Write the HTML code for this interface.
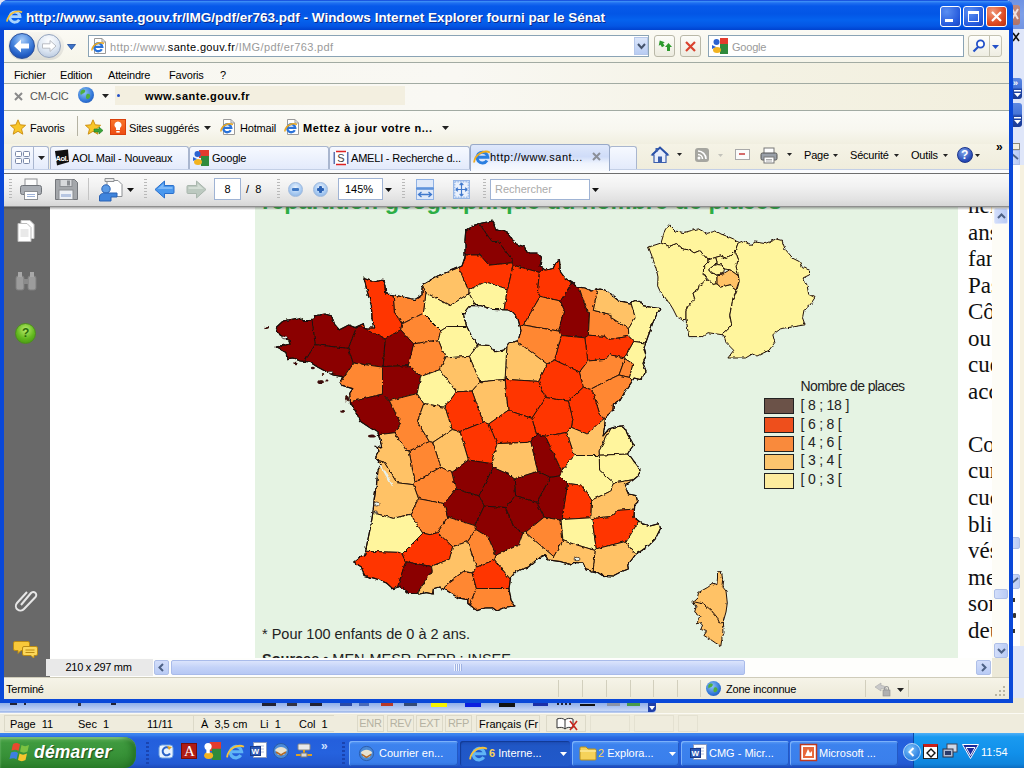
<!DOCTYPE html>
<html><head><meta charset="utf-8"><title>er763.pdf</title>
<style>
html,body{margin:0;padding:0;}
body{width:1024px;height:768px;overflow:hidden;position:relative;background:#dfe4f7;font-family:"DejaVu Sans Condensed","Liberation Sans",sans-serif;font-size:11px;color:#000;}
div,span{position:absolute;box-sizing:border-box;white-space:nowrap;}
.t{font-family:"Liberation Sans",sans-serif;font-size:11px;line-height:14px;letter-spacing:-0.2px;}
.b{font-weight:bold;}
svg{position:absolute;overflow:visible;}
.lg{font-family:"Liberation Sans",sans-serif;font-size:14px;line-height:18px;color:#222;letter-spacing:-0.2px;}
.sb{top:715px;width:27px;height:17px;border:1px solid #dcd9c8;font-family:"Liberation Sans",sans-serif;font-size:11px;line-height:15px;text-align:center;color:#b5b2a2;letter-spacing:-.3px;}
.tb{top:741px;height:25px;border-radius:3px;background:linear-gradient(#5a9bf5 0,#3c82ee 15%,#3a7fec 85%,#2f6fd8 100%);box-shadow:inset 1px 1px 0 #7ab0fa,inset -1px -1px 0 #2459c4;}
.tb.act{background:linear-gradient(#1c4cb4 0,#2057c6 20%,#2159ca 100%);box-shadow:inset 1px 1px 1px #123a94;}
.tl{top:746px;color:#fff;letter-spacing:0;}
</style></head><body>

<!-- ===== background (other windows behind) ===== -->
<div id="bgright" style="left:1009px;top:0;width:15px;height:737px;background:#dfe6f9;background-image:radial-gradient(#eef2fd 0.6px,transparent 0.7px);background-size:2px 2px;"></div>
<div style="left:1009px;top:0;width:15px;height:29px;background:linear-gradient(#6f93e4,#7d9fe8 50%,#7394e2);"></div>
<div style="left:1009px;top:5px;width:11px;height:20px;background:linear-gradient(#c08a80,#b07468);border-radius:0 3px 3px 0;"></div>
<svg style="left:1012px;top:9px" width="7" height="11" viewBox="0 0 7 11"><path d="M0 0 L6 10 M0 10 L6 0" stroke="#efe0dc" stroke-width="2"/></svg>
<svg style="left:1013px;top:33px" width="7" height="9" viewBox="0 0 7 9"><path d="M0 0 L6 8 M0 8 L6 0" stroke="#111" stroke-width="1.600"/></svg>
<div style="left:1009px;top:78px;width:13px;height:21px;border-radius:0 3px 3px 0;background:linear-gradient(#5c88e2 0,#4775d8 45%,#1f45a6 55%,#1a3c98 100%);"></div>
<div class="t b" style="left:1013px;top:76px;color:#fff;font-size:9px;letter-spacing:-1px;">››</div>
<svg style="left:1014px;top:90px" width="7" height="7" viewBox="0 0 7 7"><path d="M0 0h7v1.500h-7z M0 3h7L3.500 7z" fill="#fff"/></svg>
<div style="left:1009px;top:103px;width:13px;height:24px;border-radius:0 3px 3px 0;background:linear-gradient(#5c88e2 0,#4775d8 45%,#1f45a6 55%,#1a3c98 100%);"></div>
<svg style="left:1014px;top:117px" width="7" height="7" viewBox="0 0 7 7"><path d="M0 0h7v1.500h-7z M0 3h7L3.500 7z" fill="#fff"/></svg>
<div style="left:1009px;top:143px;width:11px;height:7px;background:#f4f1e2;border:1px solid #8a8878;"></div>
<div style="left:1009px;top:150px;width:11px;height:15px;background:linear-gradient(90deg,#d3defa,#b9cbf5);border:1px solid #aebfe8;"></div>
<svg style="left:1012px;top:154px" width="7" height="6" viewBox="0 0 7 6"><path d="M0 0 L6 5" stroke="#4d6185" stroke-width="1.800"/></svg>
<div style="left:1009px;top:165px;width:10.500px;height:481px;background:#fff;"></div>
<div style="left:1019.500px;top:165px;width:4.500px;height:481px;background:#f6f1e0;"></div>
<div style="left:1009px;top:537px;width:11px;height:12px;border-radius:2px;background:linear-gradient(90deg,#d3defa,#b9cbf5);border:1px solid #aebfe8;"></div>
<div style="left:1009px;top:574px;width:11px;height:15px;border-radius:2px;background:linear-gradient(90deg,#d3defa,#b9cbf5);border:1px solid #aebfe8;"></div>
<svg style="left:1012px;top:578px" width="7" height="6" viewBox="0 0 7 6"><path d="M0 5 L6 0" stroke="#4d6185" stroke-width="1.800"/></svg>
<div style="left:1013px;top:598px;width:2px;height:4px;background:#333;"></div>
<div style="left:1013px;top:613px;width:3px;height:5px;background:#333;border-radius:1px;"></div>
<div style="left:1013px;top:629px;width:2px;height:4px;background:#333;"></div>
<div id="bgbottom" style="left:0;top:698px;width:1024px;height:40px;background:#ece9d8;"></div>

<!-- ===== IE window ===== -->
<div id="win" style="left:0;top:0;width:1013px;height:703px;background:#0a48d8;border-radius:8px 8px 0 0;"></div>
<div id="titlebar" style="left:0;top:0;width:1013px;height:30px;border-radius:8px 8px 0 0;background:linear-gradient(#0a3bd6 0,#3a8cf6 1.500px,#1f6ff0 3px,#0759ea 6px,#0356e6 14px,#0562ee 20px,#0456e4 26px,#0042cf 30px);"></div>
<div id="title" class="b" style="left:26px;top:9px;font-family:'Liberation Sans',sans-serif;font-size:13.5px;line-height:17px;color:#fff;text-shadow:1px 1px 0 #0a2a8c;letter-spacing:0;">http://www.sante.gouv.fr/IMG/pdf/er763.pdf - Windows Internet Explorer fourni par le Sénat</div>

<div id="client" style="left:4px;top:30px;width:1005px;height:668px;background:#f5f3e6;"></div>

<!-- CHROME START -->
<!-- address row -->
<div style="left:4px;top:30px;width:1005px;height:32px;background:linear-gradient(#fbfaf4,#f6f5ea);"></div>
<div style="left:4px;top:62px;width:1005px;height:1px;background:#a2aba3;box-shadow:0 1px 0 #fdfdfa;"></div>
<!-- back/forward -->
<div style="left:8px;top:32px;width:56px;height:28px;border-radius:14px;background:linear-gradient(#f4f3ee,#c9c9c4);opacity:.55;"></div>
<div style="left:9px;top:33px;width:26px;height:26px;border-radius:13px;background:radial-gradient(circle at 50% 25%,#a9cdf8 0,#4d8ae0 40%,#245fc6 70%,#163f98 100%);border:1px solid #2a4f9a;"></div>
<svg style="left:13px;top:39px" width="18" height="14" viewBox="0 0 18 14"><path d="M1 7 L8 0.5 L8 4.5 L16 4.5 L16 9.5 L8 9.5 L8 13.5 Z" fill="#fff"/></svg>
<div style="left:37px;top:34px;width:24px;height:24px;border-radius:12px;background:radial-gradient(circle at 50% 25%,#fdfeff 0,#dbe5f2 55%,#aebfd8 100%);border:1px solid #93a3bd;"></div>
<svg style="left:41px;top:40px" width="16" height="12" viewBox="0 0 16 12"><path d="M15 6 L9 0.5 L9 3.8 L1.5 3.8 L1.5 8.2 L9 8.2 L9 11.5 Z" fill="#fff" stroke="#b9bdc4" stroke-width="1"/></svg>
<svg style="left:67px;top:44px" width="9" height="6" viewBox="0 0 9 6"><path d="M0.5 0.5 L8.5 0.5 L4.5 5.5 Z" fill="#3d73c8" stroke="#1d4a9a" stroke-width=".8"/></svg>
<!-- address box -->
<div style="left:88px;top:35px;width:561px;height:22px;background:#fff;border:1px solid #8aa3b5;"></div>
<svg style="left:91px;top:38px" width="16" height="16" viewBox="0 0 16 16"><path d="M3.500 .5h7.500l3.500 3.500v11.500h-11z" fill="#fff" stroke="#9a9a9a"/><path d="M11 .5v3.500h3.500" fill="none" stroke="#9a9a9a"/><path d="M10.800 11.200 A4 4 0 1 1 11.300 8.800 L4.200 8.800" fill="none" stroke="#2a72d8" stroke-width="2.300"/><path d="M.8 12.500 C1.500 6.500,8 3.500,13 5.500" fill="none" stroke="#eaa820" stroke-width="1.500"/></svg>
<div class="t" style="left:110px;top:40px;font-size:11px;color:#9a9a9a;letter-spacing:0.36px;">http://www.<span style="position:static;color:#000">sante.gouv.fr</span>/IMG/pdf/er763.pdf</div>
<div style="left:634px;top:37px;width:14px;height:18px;background:linear-gradient(#dbe6fb,#b8ccf3);border:1px solid #b5c7ea;"></div>
<svg style="left:637px;top:43px" width="9" height="7" viewBox="0 0 9 7"><path d="M1 1 L4.5 5 L8 1" fill="none" stroke="#45536c" stroke-width="2"/></svg>
<!-- refresh / stop -->
<div style="left:654px;top:35px;width:21px;height:22px;border:1px solid #b9b8a8;border-radius:3px;background:linear-gradient(#fdfdf9,#ecebdf);"></div>
<svg style="left:657px;top:39px" width="16" height="14" viewBox="0 0 16 14"><path d="M1 5 L4.5 1 L8 5 L6 5 L6 8 L3 8 L3 5 Z" fill="#2c9a2c" transform="rotate(-30 4.5 4.5)"/><path d="M8 8 L11.5 4 L15 8 L13 8 L13 12 L10 12 L10 8 Z" fill="#2c9a2c"/></svg>
<div style="left:680px;top:35px;width:21px;height:22px;border:1px solid #b9b8a8;border-radius:3px;background:linear-gradient(#fdfdf9,#ecebdf);"></div>
<svg style="left:685px;top:41px" width="11" height="11" viewBox="0 0 11 11"><path d="M1 1 L10 10 M10 1 L1 10" stroke="#d9432f" stroke-width="2.2"/></svg>
<!-- search box -->
<div style="left:708px;top:35px;width:256px;height:22px;background:#fff;border:1px solid #8aa3b5;"></div>
<svg style="left:712px;top:38px" width="16" height="16" viewBox="0 0 16 16"><rect x="6" y="0" width="10" height="8" fill="#e33b2e"/><rect x="8" y="6" width="8" height="10" fill="#2f8a3c"/><rect x="0" y="0" width="8" height="16" fill="#fff"/><circle cx="4.5" cy="4" r="3" fill="#2b62d0"/><ellipse cx="5" cy="12" rx="4" ry="3" fill="#f2b320"/><path d="M0 7 L4 9 L0 11z" fill="#2b62d0"/></svg>
<div class="t" style="left:732px;top:40px;color:#9a9a9a;">Google</div>
<div style="left:968px;top:35px;width:22px;height:22px;border:1px solid #c4c3b3;border-radius:3px 0 0 3px;background:linear-gradient(#fefefb,#eeedE2);"></div>
<div style="left:989px;top:35px;width:13px;height:22px;border:1px solid #c4c3b3;border-radius:0 3px 3px 0;background:linear-gradient(#fefefb,#eeede2);"></div>
<svg style="left:972px;top:39px" width="14" height="14" viewBox="0 0 14 14"><circle cx="8.5" cy="5" r="3.6" fill="#fff" stroke="#2350c8" stroke-width="1.8"/><path d="M6 8 L1.5 12.5" stroke="#2350c8" stroke-width="2.2"/></svg>
<svg style="left:992px;top:45px" width="7" height="4" viewBox="0 0 7 4"><path d="M0 0h7L3.5 4z" fill="#2350c8"/></svg>

<!-- menu row -->
<div style="left:4px;top:63px;width:1005px;height:20px;background:linear-gradient(90deg,#f8f7f0 0,#f9f8f3 45%,#f4f2e4 75%,#f2efde 100%);"></div>
<div style="left:4px;top:83px;width:1005px;height:1px;background:#a2aba3;box-shadow:0 1px 0 #fdfdfa;"></div>
<div class="t" style="left:14px;top:68px;">Fichier</div>
<div class="t" style="left:60px;top:68px;">Edition</div>
<div class="t" style="left:108px;top:68px;">Atteindre</div>
<div class="t" style="left:169px;top:68px;">Favoris</div>
<div class="t" style="left:220px;top:68px;">?</div>

<!-- cm-cic row -->
<div style="left:4px;top:84px;width:1005px;height:26px;background:linear-gradient(90deg,#faf9f3 0,#f9f8f3 45%,#f4f2e4 75%,#f2efde 100%);"></div>
<div style="left:115px;top:86px;width:290px;height:19px;background:#f3efe0;"></div>
<div style="left:4px;top:110px;width:1005px;height:1px;background:#a2aba3;box-shadow:0 1px 0 #fdfdfa;"></div>
<svg style="left:14px;top:92px" width="9" height="9" viewBox="0 0 9 9"><path d="M1 1 L8 8 M8 1 L1 8" stroke="#8a8a8a" stroke-width="2"/></svg>
<div class="t" style="left:30px;top:89px;color:#555;">CM-CIC</div>
<div style="left:78px;top:87px;width:16px;height:16px;border-radius:8px;background:radial-gradient(circle at 40% 35%,#8fc4f6 0,#2f74d6 60%,#1c4aa0 100%);"></div>
<svg style="left:78px;top:87px" width="16" height="16" viewBox="0 0 16 16"><path d="M4 3 C6 2,8 3,7 5 C6 7,4 6,3 8 C2 7,2 4,4 3z M9 7 C11 6,13 8,12 10 C11 12,9 13,8 11 C8 9,8 8,9 7z" fill="#4fae3e"/></svg>
<svg style="left:102px;top:94px" width="7" height="4" viewBox="0 0 7 4"><path d="M0 0h7L3.5 4z" fill="#222"/></svg>
<div style="left:117px;top:94px;width:3px;height:3px;border-radius:2px;background:#2350c8;"></div>
<div class="t b" style="left:145px;top:89px;letter-spacing:.5px;">www.sante.gouv.fr</div>

<!-- favorites row -->
<div style="left:4px;top:111px;width:1005px;height:33px;background:linear-gradient(#fbfbf6,#f8f7f0 55%,#f1efe0);"></div>
<svg style="left:10px;top:119px" width="16" height="16" viewBox="0 0 16 16"><path d="M8 .8 L10.2 5.8 L15.6 6.3 L11.5 9.9 L12.8 15.2 L8 12.3 L3.2 15.2 L4.5 9.9 L.4 6.3 L5.8 5.8z" fill="#f8c62a" stroke="#c98a0c" stroke-width=".9"/></svg>
<div class="t" style="left:30px;top:121px;">Favoris</div>
<div style="left:77px;top:116px;width:1px;height:20px;background:#b5b3a3;"></div>
<svg style="left:85px;top:119px" width="18" height="16" viewBox="0 0 18 16"><path d="M8 .8 L10.2 5.8 L15.6 6.3 L11.5 9.9 L12.8 15.2 L8 12.3 L3.2 15.2 L4.5 9.9 L.4 6.3 L5.8 5.8z" fill="#f8c62a" stroke="#c98a0c" stroke-width=".9"/><path d="M9 10 h5 v-2 l4 3.5 l-4 3.5 v-2 h-5z" fill="#3aa53a" stroke="#1f7a1f" stroke-width=".6"/></svg>
<div style="left:110px;top:119px;width:16px;height:16px;background:linear-gradient(#f7742a,#ee4e14);border:1px solid #d9400c;"></div>
<svg style="left:110px;top:119px" width="16" height="16" viewBox="0 0 16 16"><path d="M8 2.5 a3.6 3.6 0 0 1 2 6.6 v2 h-4 v-2 a3.6 3.6 0 0 1 2 -6.6z" fill="#fff"/><rect x="6.3" y="12" width="3.4" height="1.6" fill="#fff"/></svg>
<div class="t" style="left:129px;top:121px;">Sites suggérés</div>
<svg style="left:204px;top:126px" width="7" height="4" viewBox="0 0 7 4"><path d="M0 0h7L3.5 4z" fill="#222"/></svg>
<svg style="left:220px;top:119px" width="16" height="16" viewBox="0 0 16 16"><path d="M3.500 .5h7.500l3.500 3.500v11.500h-11z" fill="#fff" stroke="#9a9a9a"/><path d="M11 .5v3.500h3.500" fill="none" stroke="#9a9a9a"/><path d="M10.800 11.200 A4 4 0 1 1 11.300 8.800 L4.200 8.800" fill="none" stroke="#2a72d8" stroke-width="2.300"/><path d="M.8 12.500 C1.500 6.500,8 3.500,13 5.500" fill="none" stroke="#eaa820" stroke-width="1.500"/></svg>
<div class="t" style="left:240px;top:121px;">Hotmail</div>
<svg style="left:284px;top:119px" width="16" height="16" viewBox="0 0 16 16"><path d="M3.500 .5h7.500l3.500 3.500v11.500h-11z" fill="#fff" stroke="#9a9a9a"/><path d="M11 .5v3.500h3.500" fill="none" stroke="#9a9a9a"/><path d="M10.800 11.200 A4 4 0 1 1 11.300 8.800 L4.200 8.800" fill="none" stroke="#2a72d8" stroke-width="2.300"/><path d="M.8 12.500 C1.500 6.500,8 3.500,13 5.500" fill="none" stroke="#eaa820" stroke-width="1.500"/></svg>
<div class="t b" style="left:303px;top:121px;letter-spacing:.56px;">Mettez à jour votre n...</div>
<svg style="left:442px;top:126px" width="7" height="4" viewBox="0 0 7 4"><path d="M0 0h7L3.5 4z" fill="#222"/></svg>

<!-- tab row -->
<div style="left:4px;top:144px;width:1005px;height:28px;background:linear-gradient(#f5f3e6,#efecdb);"></div>
<div style="left:4px;top:169px;width:1005px;height:1px;background:#c3cfe6;"></div>
<div style="left:4px;top:170px;width:1005px;height:3px;background:#fbfcfe;"></div>
<div style="left:11px;top:146px;width:23px;height:23px;border:1px solid #a9b6cf;border-bottom:none;border-radius:3px 0 0 0;background:linear-gradient(#f8faff,#e4ebfb);"></div>
<svg style="left:15px;top:151px" width="16" height="14" viewBox="0 0 16 14"><g fill="#fff" stroke="#7a88a8"><rect x=".5" y=".5" width="6" height="5" rx="1"/><rect x="8.5" y=".5" width="6" height="5" rx="1"/><rect x=".5" y="7.5" width="6" height="5" rx="1"/><rect x="8.5" y="7.5" width="6" height="5" rx="1"/></g></svg>
<div style="left:34px;top:146px;width:15px;height:23px;border:1px solid #a9b6cf;border-bottom:none;border-left:none;border-radius:0 3px 0 0;background:linear-gradient(#f8faff,#e4ebfb);"></div>
<svg style="left:38px;top:156px" width="7" height="4" viewBox="0 0 7 4"><path d="M0 0h7L3.5 4z" fill="#222"/></svg>
<div style="left:50px;top:146px;width:139px;height:23px;border:1px solid #a9b6cf;border-bottom:none;border-radius:3px 3px 0 0;background:linear-gradient(#f6f9ff,#e3eafb);"></div>
<div style="left:189px;top:146px;width:140px;height:23px;border:1px solid #a9b6cf;border-bottom:none;border-radius:3px 3px 0 0;background:linear-gradient(#f6f9ff,#e3eafb);"></div>
<div style="left:329px;top:146px;width:141px;height:23px;border:1px solid #a9b6cf;border-bottom:none;border-radius:3px 3px 0 0;background:linear-gradient(#f6f9ff,#e3eafb);"></div>
<div style="left:609px;top:146px;width:28px;height:23px;border:1px solid #a9b6cf;border-bottom:none;border-radius:3px 3px 0 0;background:linear-gradient(#f6f9ff,#e3eafb);"></div>
<div style="left:470px;top:144px;width:140px;height:27px;border:1px solid #98a9c8;border-bottom:none;border-radius:3px 3px 0 0;background:linear-gradient(#dfe8fb 0,#cfdcf8 45%,#eef3fd 70%,#f8fafe 100%);"></div>
<!-- tab 1 aol -->
<svg style="left:53px;top:149px" width="17" height="17" viewBox="0 0 17 17"><path d="M2 2 L15 0.5 L16 13 L4 16.5 Z" fill="#111"/><text x="2.6" y="11.5" font-family="Liberation Sans,sans-serif" font-weight="bold" font-size="7.5" fill="#fff" letter-spacing="-.5">Aol.</text></svg>
<div class="t" style="left:72px;top:151px;">AOL Mail - Nouveaux</div>
<svg style="left:193px;top:150px" width="16" height="16" viewBox="0 0 16 16"><rect x="6" y="0" width="10" height="8" fill="#e33b2e"/><rect x="8" y="6" width="8" height="10" fill="#2f8a3c"/><rect x="0" y="0" width="8" height="16" fill="#fff" opacity=".0"/><circle cx="4.5" cy="4" r="3" fill="#2b62d0"/><ellipse cx="5" cy="12" rx="4" ry="3" fill="#f2b320"/><path d="M0 7 L4 9 L0 11z" fill="#2b62d0"/></svg>
<div class="t" style="left:212px;top:151px;">Google</div>
<svg style="left:333px;top:150px" width="16" height="16" viewBox="0 0 16 16"><rect x="2.5" y="1" width="11" height="14" fill="#fff"/><path d="M3 1.5h10M3 14.5h10" stroke="#d22" stroke-width="1.4"/><path d="M1.2 2v12M14.8 2v12" stroke="#39509a" stroke-width="1.2"/><text x="4.2" y="12.2" font-family="Liberation Sans,sans-serif" font-size="11" fill="#444">S</text></svg>
<div class="t" style="left:351px;top:151px;">AMELI - Recherche d...</div>
<svg style="left:473px;top:148px" width="18" height="18" viewBox="0 0 18 18"><path d="M14 12.500 A5.400 5.400 0 1 1 14.800 9.200 L5 9.200" fill="none" stroke="#2b7fe0" stroke-width="3"/><path d="M1 14.500 C2 6,11 1.500,17 4.500" fill="none" stroke="#f0ac1c" stroke-width="1.800"/></svg>
<div class="t" style="left:490px;top:150px;letter-spacing:.5px;">http://www.sant...</div>
<svg style="left:592px;top:152px" width="9" height="9" viewBox="0 0 9 9"><path d="M1 1 L8 8 M8 1 L1 8" stroke="#8b8f98" stroke-width="2"/></svg>
<!-- command bar -->
<svg style="left:651px;top:146px" width="18" height="18" viewBox="0 0 18 18"><path d="M1 9 L9 1.5 L17 9 L15 9 L15 16.5 L3 16.5 L3 9z" fill="#e8eefb" stroke="#3b5fae" stroke-width="1.2"/><path d="M1 9 L9 1.5 L17 9" fill="none" stroke="#2b52a8" stroke-width="2"/><rect x="7" y="10.5" width="4" height="6" fill="#3b5fae"/><rect x="4.5" y="2" width="2.5" height="3.5" fill="#3b5fae"/></svg>
<svg style="left:677px;top:153px" width="5" height="3" viewBox="0 0 5 3"><path d="M0 0h5L2.500 3z" fill="#222"/></svg>
<div style="left:695px;top:148px;width:14px;height:14px;border-radius:3px;background:#a6a6a0;"></div>
<svg style="left:695px;top:148px" width="14" height="14" viewBox="0 0 14 14"><circle cx="4" cy="10" r="1.5" fill="#fff"/><path d="M3 6.5 a4.5 4.5 0 0 1 4.5 4.5 M3 3 a8 8 0 0 1 8 8" fill="none" stroke="#fff" stroke-width="1.6"/></svg>
<svg style="left:718px;top:154px" width="5" height="3" viewBox="0 0 5 3"><path d="M0 0h5L2.5 3z" fill="#c3c3bb"/></svg>
<div style="left:735px;top:149px;width:15px;height:11px;background:#fbfbfb;border:1px solid #a9a9a9;"></div>
<div style="left:739px;top:153px;width:6px;height:2px;background:#d46a6a;"></div>
<svg style="left:760px;top:147px" width="18" height="17" viewBox="0 0 18 17"><rect x="4" y="1" width="10" height="6" fill="#fff" stroke="#777"/><rect x="1" y="6" width="16" height="7" rx="1.5" fill="#9aa0a8" stroke="#555"/><rect x="4" y="10" width="10" height="6" fill="#fff" stroke="#777"/><path d="M6 12.5h6M6 14h6" stroke="#999" stroke-width=".8"/></svg>
<svg style="left:787px;top:153px" width="5" height="3" viewBox="0 0 5 3"><path d="M0 0h5L2.500 3z" fill="#222"/></svg>
<div class="t" style="left:804px;top:148px;">Page</div>
<svg style="left:833px;top:154px" width="5" height="3" viewBox="0 0 5 3"><path d="M0 0h5L2.500 3z" fill="#222"/></svg>
<div class="t" style="left:850px;top:148px;">Sécurité</div>
<svg style="left:894px;top:154px" width="5" height="3" viewBox="0 0 5 3"><path d="M0 0h5L2.500 3z" fill="#222"/></svg>
<div class="t" style="left:911px;top:148px;">Outils</div>
<svg style="left:943px;top:154px" width="5" height="3" viewBox="0 0 5 3"><path d="M0 0h5L2.500 3z" fill="#222"/></svg>
<div style="left:957px;top:147px;width:16px;height:16px;border-radius:8px;background:radial-gradient(circle at 40% 30%,#7fa4ea,#2447b4 70%);border:1px solid #1b358c;"></div>
<div class="t b" style="left:961px;top:148px;color:#fff;font-size:12px;">?</div>
<svg style="left:975px;top:154px" width="5" height="3" viewBox="0 0 5 3"><path d="M0 0h5L2.500 3z" fill="#222"/></svg>
<div class="t b" style="left:996px;top:140px;font-size:12px;">»</div>

<!-- title buttons -->
<div style="left:940px;top:6px;width:21px;height:21px;border:1px solid #fff;border-radius:3px;background:radial-gradient(circle at 30% 25%,#5b8ff2,#2459dc 70%,#1a44c0);"></div>
<div style="left:945px;top:19px;width:8px;height:3px;background:#fff;"></div>
<div style="left:963px;top:6px;width:21px;height:21px;border:1px solid #fff;border-radius:3px;background:radial-gradient(circle at 30% 25%,#5b8ff2,#2459dc 70%,#1a44c0);"></div>
<div style="left:968px;top:11px;width:11px;height:11px;border:1px solid #fff;border-top:3px solid #fff;"></div>
<div style="left:986px;top:6px;width:21px;height:21px;border:1px solid #fff;border-radius:3px;background:radial-gradient(circle at 30% 25%,#f09a7c,#de4a22 60%,#b8300f);"></div>
<svg style="left:991px;top:11px" width="11" height="11" viewBox="0 0 11 11"><path d="M1 1 L10 10 M10 1 L1 10" stroke="#fff" stroke-width="2.2"/></svg>
<!-- title icon -->
<svg style="left:6px;top:8px" width="17" height="17" viewBox="0 0 18 18"><path d="M14 12.500 A5.400 5.400 0 1 1 14.800 9.200 L5 9.200" fill="none" stroke="#a8d4ff" stroke-width="3"/><path d="M1 14.500 C2 6,11 1.500,17 4.500" fill="none" stroke="#f5c23a" stroke-width="1.800"/></svg>
<!-- CHROME END -->
<!-- PDFBAR START -->
<!-- pdf toolbar -->
<div style="left:4px;top:173px;width:1005px;height:34px;background:linear-gradient(#fafafa 0,#f1f1f1 40%,#e2e2e2 80%,#d6d6d6 100%);border-top:1px solid #6e6e6e;border-bottom:1px solid #8e8e8e;"></div>
<div style="left:9px;top:179px;width:3px;height:20px;background:repeating-linear-gradient(#b9b9b9 0 1px,transparent 1px 3px);"></div>
<!-- printer -->
<svg style="left:19px;top:178px" width="24" height="23" viewBox="0 0 24 23"><rect x="6" y="1" width="12" height="8" fill="#fdfdfd" stroke="#8d9094"/><rect x="1.5" y="7.5" width="21" height="9" rx="2" fill="#a9adb3" stroke="#70747a"/><rect x="5.500" y="13.5" width="13" height="8" fill="#fff" stroke="#8d9094"/><path d="M8 16.500h8M8 18.500h8" stroke="#9fb3d8" stroke-width="1"/></svg>
<!-- floppy -->
<svg style="left:54px;top:178px" width="25" height="23" viewBox="0 0 25 23"><path d="M1.5 1.500h19l3 3v17h-22z" fill="#a4a7ab" stroke="#74777c"/><rect x="6" y="1.500" width="12" height="7" fill="#d7d9dc" stroke="#8a8d92"/><rect x="13" y="2.500" width="3" height="5" fill="#8a8d92"/><rect x="5" y="12" width="14" height="9.500" fill="#eef1f6" stroke="#8a8d92"/><rect x="7" y="16" width="10" height="3" fill="#b7c6e2"/></svg>
<div style="left:88px;top:178px;width:1px;height:22px;background:#c4c4c4;"></div>
<!-- person/page -->
<svg style="left:98px;top:177px" width="26" height="25" viewBox="0 0 26 25"><path d="M9 3.500h11l4 4v12h-15z" fill="#fff" stroke="#8d9094"/><path d="M7 1.500h9v3h-9z" fill="#e9e9e9" stroke="#8d9094"/><circle cx="8" cy="12" r="4.200" fill="#5b9be6" stroke="#2a62b4"/><path d="M1.500 24 v-4 c0-3 3-4 6.500-4 h11 v4 h-6 v4z" fill="#3f84dc" stroke="#2a62b4"/></svg>
<svg style="left:127px;top:188px" width="7" height="4" viewBox="0 0 7 4"><path d="M0 0h7L3.500 4z" fill="#111"/></svg>
<div style="left:144px;top:179px;width:3px;height:20px;background:repeating-linear-gradient(#b9b9b9 0 1px,transparent 1px 3px);"></div>
<!-- arrows -->
<svg style="left:154px;top:180px" width="21" height="19" viewBox="0 0 21 19"><path d="M1 9.500 L10.500 1 V5.500 H19 a1 1 0 0 1 1 1 V12.500 a1 1 0 0 1 -1 1 H10.500 V18 Z" fill="#4a98ee" stroke="#2a6fcc" stroke-width="1"/><path d="M3.500 9 L9.500 3.500 V7 H18.500 V9z" fill="#8cc2fa" opacity=".8"/></svg>
<svg style="left:186px;top:180px" width="21" height="19" viewBox="0 0 21 19"><path d="M20 9.500 L10.500 1 V5.500 H2 a1 1 0 0 0 -1 1 V12.500 a1 1 0 0 0 1 1 H10.500 V18 Z" fill="#bcc9c0" stroke="#a9b6ad" stroke-width="1"/><path d="M17.500 9 L11.500 3.500 V7 H2.500 V9z" fill="#d8e2da" opacity=".8"/></svg>
<div style="left:214px;top:178px;width:27px;height:22px;background:#fff;border:1px solid #9fb3d4;"></div>
<div class="t" style="left:214px;top:182px;width:27px;text-align:center;letter-spacing:0;">8</div>
<div class="t" style="left:246px;top:182px;letter-spacing:0;">/&nbsp; 8</div>
<div style="left:277px;top:179px;width:3px;height:20px;background:repeating-linear-gradient(#b9b9b9 0 1px,transparent 1px 3px);"></div>
<!-- zoom buttons -->
<div style="left:288px;top:182px;width:15px;height:15px;border-radius:8px;background:radial-gradient(circle at 50% 35%,#eaf3fd 0,#a9cbf2 55%,#7faae0 100%);border:1px solid #9db9de;"></div>
<div style="left:292px;top:188px;width:7px;height:3px;background:#3f78c4;border-radius:1px;"></div>
<div style="left:313px;top:182px;width:15px;height:15px;border-radius:8px;background:radial-gradient(circle at 50% 35%,#eaf3fd 0,#a9cbf2 55%,#7faae0 100%);border:1px solid #9db9de;"></div>
<div style="left:317px;top:188px;width:7px;height:3px;background:#2c62b4;border-radius:1px;"></div>
<div style="left:319px;top:186px;width:3px;height:7px;background:#2c62b4;border-radius:1px;"></div>
<div style="left:338px;top:178px;width:45px;height:22px;background:#fff;border:1px solid #9fb3d4;"></div>
<div class="t" style="left:345px;top:182px;letter-spacing:0;">145%</div>
<svg style="left:385px;top:188px" width="7" height="4" viewBox="0 0 7 4"><path d="M0 0h7L3.500 4z" fill="#111"/></svg>
<div style="left:402px;top:179px;width:3px;height:20px;background:repeating-linear-gradient(#b9b9b9 0 1px,transparent 1px 3px);"></div>
<!-- fit width / fit page -->
<svg style="left:416px;top:179px" width="18" height="21" viewBox="0 0 18 21"><rect x=".5" y=".5" width="17" height="8" fill="#dfe9f9" stroke="#8fb1e4"/><rect x=".5" y="10.500" width="17" height="10" fill="#dfe9f9" stroke="#8fb1e4"/><path d="M0 9.500h18" stroke="#5f94dc" stroke-width="2"/><path d="M3 15.500h12M5.500 13l-3 2.500l3 2.500M12.500 13l3 2.500l-3 2.500" fill="none" stroke="#3f78cc" stroke-width="1.300"/></svg>
<svg style="left:453px;top:180px" width="17" height="19" viewBox="0 0 19 21"><rect x=".5" y=".5" width="18" height="20" fill="#cfe0f8" stroke="#8fb1e4"/><rect x="2" y="2" width="15" height="17" fill="#eaf1fc" stroke="#7aa3e0" stroke-dasharray="1.500 1.500"/><path d="M9.500 3v15M3 10.500h13M9.500 3l-2 2.500M9.500 3l2 2.500M9.500 18l-2-2.500M9.500 18l2-2.500M3 10.500l2.500-2M3 10.500l2.500 2M16 10.500l-2.500-2M16 10.500l-2.500 2" fill="none" stroke="#3f78cc" stroke-width="1.300"/></svg>
<div style="left:483px;top:179px;width:3px;height:20px;background:repeating-linear-gradient(#b9b9b9 0 1px,transparent 1px 3px);"></div>
<div style="left:490px;top:179px;width:100px;height:21px;background:#fff;border:1px solid #9fb3d4;"></div>
<div class="t" style="left:495px;top:182px;color:#aaa;letter-spacing:0;">Rechercher</div>
<svg style="left:592px;top:188px" width="7" height="4" viewBox="0 0 7 4"><path d="M0 0h7L3.500 4z" fill="#111"/></svg>
<!-- PDFBAR END -->
<!-- CONTENT START -->
<!-- content -->
<div id="content" style="left:4px;top:207px;width:1005px;height:451px;overflow:hidden;background:#fff;">
 <div style="left:0;top:0;width:46px;height:451px;background:#696969;background-image:radial-gradient(#747474 0.6px,transparent 0.7px);background-size:2px 2px;"></div>
 <div id="pdfpage" style="left:250.500px;top:0;width:703.500px;height:451px;background:#e5f3e3;"></div>
 <div class="b" style="left:258px;top:-19.800px;font-family:'Liberation Sans',sans-serif;font-size:23.500px;line-height:28px;color:#2cae45;">répartition géographique du nombre de places</div>
 <!-- MAP START -->
<svg id="map" style="left:0;top:0" width="1005" height="451" viewBox="0 0 1005 451">
<defs><filter id="jag" x="-2%" y="-2%" width="104%" height="104%"><feTurbulence type="fractalNoise" baseFrequency="0.22" numOctaves="2" seed="7" result="n"/><feDisplacementMap in="SourceGraphic" in2="n" scale="3.2" xChannelSelector="R" yChannelSelector="G"/></filter></defs>
<g filter="url(#jag)">
<g stroke="#24120a" stroke-width="1" stroke-linejoin="round">
<path d="M494.1,34.5 508.2,52.9 508.0,55.8 509.1,58.2 535.4,65.4 539.4,61.7 536.0,59.0 537.5,50.0 533.0,46.0 523.5,46.0 520.4,39.7 511.0,36.6 505.0,27.0 499.0,24.0 492.0,23.0 489.0,14.0 478.0,16.0 475.3,16.8 487.8,34.5Z" fill="#8b0000"/>
<path d="M484.9,58.2 508.0,55.8 508.2,52.9 494.1,34.5 487.8,34.5 475.3,16.8 468.8,18.6 461.8,23.0 461.0,33.0 461.0,48.0 475.9,48.0Z" fill="#8b0000"/>
<path d="M461.0,50.0 458.0,59.0 454.7,60.4 463.1,80.4 465.0,82.7 481.4,74.8 503.3,82.1 503.9,81.5 509.1,58.2 508.0,55.8 484.9,58.2 475.9,48.0 461.0,48.0Z" fill="#ff3600"/>
<path d="M421.9,85.8 446.1,98.7 465.0,86.5 465.0,82.7 463.1,80.4 454.7,60.4 446.0,64.0 434.4,68.6 420.4,76.4 418.8,79.5 421.3,83.8Z" fill="#ffc266"/>
<path d="M503.3,82.1 481.4,74.8 465.0,82.7 465.0,86.5 471.7,98.6 476.6,98.6 489.0,102.5 500.1,102.8Z" fill="#fff59d"/>
<path d="M503.9,81.5 503.3,82.1 500.1,102.8 506.0,103.0 514.0,112.0 516.0,119.6 519.5,118.0 536.2,89.4 533.5,84.4 535.4,65.4 509.1,58.2Z" fill="#ff3600"/>
<path d="M556.5,94.0 568.0,75.7 561.0,71.0 556.5,65.0 555.5,53.5 552.0,55.0 549.0,61.7 541.0,63.0 539.4,61.7 535.4,65.4 533.5,84.4 536.2,89.4Z" fill="#ff3600"/>
<path d="M446.1,98.7 421.9,85.8 419.3,106.3 436.8,123.8 443.9,119.5 462.8,119.5 462.5,119.0 459.4,106.4 465.7,98.6 471.7,98.6 465.0,86.5Z" fill="#fff59d"/>
<path d="M418.0,81.0 418.0,88.0 411.0,92.5 399.0,90.0 389.5,87.9 389.2,88.6 390.4,105.2 397.9,117.0 419.3,106.3 421.9,85.8 421.3,83.8 418.8,79.5Z" fill="#ff8731"/>
<path d="M396.7,122.8 397.9,117.0 390.4,105.2 389.2,88.6 389.5,87.9 387.0,87.4 382.0,87.4 380.7,78.0 379.0,73.0 369.7,75.0 358.8,71.0 360.4,73.0 362.7,82.7 367.4,98.6 368.0,111.0 369.7,121.0 360.4,121.0 359.6,116.6 355.3,118.6 381.1,132.0Z" fill="#ff3600"/>
<path d="M396.7,122.8 409.5,136.9 434.3,132.9 436.8,123.8 419.3,106.3 397.9,117.0Z" fill="#ff8731"/>
<path d="M560.1,102.6 556.5,94.0 536.2,89.4 519.5,118.0 554.7,124.1Z" fill="#ff8731"/>
<path d="M560.1,102.6 554.7,124.1 557.2,128.5 580.8,130.8 584.4,128.2 585.5,105.5 583.2,104.8 575.1,80.3 573.0,80.0 569.0,76.4 568.0,75.7 556.5,94.0Z" fill="#8b0000"/>
<path d="M585.5,105.5 584.4,128.2 600.8,129.4 604.2,132.7 624.8,129.3 624.5,121.6 607.4,110.7 606.7,107.5 589.3,103.3 593.7,82.6 588.0,84.0 581.0,81.0 575.1,80.3 583.2,104.8Z" fill="#ff8731"/>
<path d="M606.7,107.5 607.4,110.7 624.5,121.6 631.3,110.7 626.9,95.5 626.0,96.0 621.0,95.0 615.0,94.0 610.0,90.0 604.0,84.0 596.0,82.0 593.7,82.6 589.3,103.3Z" fill="#ffc266"/>
<path d="M624.5,121.6 624.8,129.3 629.7,134.4 641.7,136.1 643.8,130.0 646.0,124.0 648.5,116.6 652.0,109.0 656.0,101.7 646.0,100.0 639.0,98.6 636.0,94.5 631.0,93.5 626.9,95.5 631.3,110.7Z" fill="#fff59d"/>
<path d="M620.4,150.9 620.9,151.7 628.8,156.8 625.4,170.4 628.5,173.5 630.0,171.0 636.0,172.5 639.0,170.0 642.0,164.0 639.0,156.4 642.0,148.6 640.0,141.0 641.7,136.1 629.7,134.4Z" fill="#fff59d"/>
<path d="M584.4,128.2 580.8,130.8 583.9,154.0 601.2,152.4 605.6,147.7 620.4,150.9 629.7,134.4 624.8,129.3 604.2,132.7 600.8,129.4Z" fill="#ff3600"/>
<path d="M550.7,153.1 575.5,165.0 583.9,154.0 580.8,130.8 557.2,128.5Z" fill="#ff3600"/>
<path d="M543.0,157.1 550.7,153.1 557.2,128.5 554.7,124.1 519.5,118.0 516.0,119.6 517.0,123.6 514.0,133.8 512.7,134.1Z" fill="#ff8731"/>
<path d="M501.2,172.4 534.8,174.4 543.0,157.1 512.7,134.1 504.7,136.0 502.9,138.7 501.1,172.3Z" fill="#ffc266"/>
<path d="M501.1,172.3 502.9,138.7 500.0,143.0 490.7,144.7 486.0,138.5 474.1,137.7 465.3,149.4 476.1,174.9Z" fill="#fff59d"/>
<path d="M441.5,150.9 465.3,149.4 474.1,137.7 473.5,137.7 467.0,128.0 462.8,119.5 443.9,119.5 436.8,123.8 434.3,132.9Z" fill="#fff59d"/>
<path d="M404.2,158.7 416.8,169.5 435.7,162.7 441.5,150.9 434.3,132.9 409.5,136.9Z" fill="#ff8731"/>
<path d="M379.2,159.5 404.2,158.7 409.5,136.9 396.7,122.8 381.1,132.0Z" fill="#8b0000"/>
<path d="M349.1,156.0 378.5,160.1 379.2,159.5 381.1,132.0 355.3,118.6 352.5,119.8 344.3,141.4Z" fill="#8b0000"/>
<path d="M344.3,141.4 352.5,119.8 351.0,120.5 344.7,118.0 335.4,122.8 330.7,117.4 327.5,108.8 321.0,107.0 310.4,108.8 307.9,112.3 311.2,137.7Z" fill="#8b0000"/>
<path d="M307.9,112.3 307.0,113.5 298.0,113.5 294.7,111.0 279.0,114.0 272.0,120.5 276.0,128.0 284.6,133.0 286.0,137.0 272.0,140.0 282.0,145.5 283.0,151.7 289.0,151.0 296.0,154.0 300.7,154.5 311.2,137.7Z" fill="#8b0000"/>
<path d="M305.7,155.0 313.5,160.0 321.0,164.0 329.0,168.0 338.5,169.7 336.3,175.4 349.1,156.0 344.3,141.4 311.2,137.7 300.7,154.5Z" fill="#8b0000"/>
<path d="M378.5,160.1 349.1,156.0 336.3,175.4 336.3,175.5 338.0,178.6 348.8,181.7 345.7,186.4 346.4,194.9 378.5,187.1Z" fill="#ff8731"/>
<path d="M378.5,160.1 378.5,187.1 385.1,193.5 385.3,193.6 413.1,186.6 416.8,169.5 404.2,158.7 379.2,159.5Z" fill="#8b0000"/>
<path d="M346.4,194.9 346.5,195.8 352.0,205.0 356.6,214.6 366.0,220.8 373.8,225.5 374.6,227.7 390.9,225.7 396.6,216.1 385.3,193.6 385.1,193.5 378.5,187.1Z" fill="#8b0000"/>
<path d="M396.6,216.1 390.9,225.7 402.0,243.2 405.0,244.0 425.4,234.6 413.3,214.7 419.8,196.6 413.1,186.6 385.3,193.6Z" fill="#ff8731"/>
<path d="M452.4,184.8 435.7,162.7 416.8,169.5 413.1,186.6 419.8,196.6 441.0,200.3Z" fill="#fff59d"/>
<path d="M452.4,184.8 468.0,184.0 476.1,174.9 465.3,149.4 441.5,150.9 435.7,162.7Z" fill="#ffc266"/>
<path d="M468.0,184.0 479.2,215.2 484.7,217.0 504.1,203.4 501.2,172.4 501.1,172.3 476.1,174.9Z" fill="#ffc266"/>
<path d="M501.2,172.4 504.1,203.4 527.9,211.3 541.6,190.5 534.8,174.4Z" fill="#ff3600"/>
<path d="M575.5,165.0 550.7,153.1 543.0,157.1 534.8,174.4 541.6,190.5 564.4,194.2 579.4,180.2Z" fill="#ff3600"/>
<path d="M601.2,152.4 583.9,154.0 575.5,165.0 579.4,180.2 586.4,182.4 607.1,171.5 607.3,171.6 615.0,168.0 620.9,151.7 620.4,150.9 605.6,147.7Z" fill="#ff8731"/>
<path d="M625.4,170.4 628.8,156.8 620.9,151.7 615.0,168.0Z" fill="#ff8731"/>
<path d="M589.0,185.7 596.2,208.4 600.1,211.7 601.4,212.2 601.6,210.0 605.0,207.0 609.0,203.0 609.4,197.0 617.0,192.0 621.0,184.5 626.6,176.7 628.5,173.5 625.4,170.4 615.0,168.0 607.3,171.6 607.1,171.5 586.4,182.4Z" fill="#ff8731"/>
<path d="M579.4,180.2 564.4,194.2 568.8,212.3 567.4,220.4 582.8,226.8 600.1,211.7 596.2,208.4 589.0,185.7 586.4,182.4Z" fill="#ff3600"/>
<path d="M564.4,194.2 541.6,190.5 527.9,211.3 532.4,227.2 541.5,229.3 562.8,225.4 567.4,220.4 568.8,212.3Z" fill="#ff3600"/>
<path d="M532.4,227.2 527.9,211.3 504.1,203.4 484.7,217.0 493.1,236.6 523.5,235.4 526.8,234.2Z" fill="#ff3600"/>
<path d="M479.2,215.2 468.0,184.0 452.4,184.8 441.0,200.3 448.2,222.6 456.0,224.5Z" fill="#ff3600"/>
<path d="M441.0,200.3 419.8,196.6 413.3,214.7 425.4,234.6 428.8,235.4 448.2,222.6Z" fill="#ffc266"/>
<path d="M484.7,217.0 479.2,215.2 456.0,224.5 464.4,253.0 487.0,256.6 493.1,236.6Z" fill="#ff3600"/>
<path d="M447.8,265.6 464.4,253.0 456.0,224.5 448.2,222.6 428.8,235.4 436.8,260.1Z" fill="#ffc266"/>
<path d="M405.0,244.0 411.0,275.2 436.8,260.1 428.8,235.4 425.4,234.6Z" fill="#ff8731"/>
<path d="M376.0,231.7 377.7,241.0 372.0,239.0 375.0,244.0 371.5,250.5 373.7,253.3 380.2,255.2 392.8,275.7 409.5,277.7 411.0,275.2 405.0,244.0 402.0,243.2 390.9,225.7 374.6,227.7Z" fill="#ffc266"/>
<path d="M489.0,260.5 505.8,267.9 510.2,271.9 533.7,264.4 526.8,234.2 523.5,235.4 493.1,236.6 487.0,256.6Z" fill="#ffc266"/>
<path d="M555.9,268.9 557.5,263.7 541.5,229.3 532.4,227.2 526.8,234.2 533.7,264.4 546.4,270.3Z" fill="#8b0000"/>
<path d="M562.8,225.4 541.5,229.3 557.5,263.7 570.5,248.5Z" fill="#ff3600"/>
<path d="M582.8,226.8 567.4,220.4 562.8,225.4 570.5,248.5 595.2,248.5 595.4,248.2 595.2,243.8 607.1,221.2 604.7,222.0 599.0,229.0 600.5,220.0 601.4,212.2 600.1,211.7Z" fill="#ffc266"/>
<path d="M595.4,248.2 623.6,247.1 623.5,247.0 626.0,243.0 629.7,238.0 627.0,233.0 623.5,227.4 621.5,222.0 618.8,218.8 611.0,220.0 607.1,221.2 595.2,243.8Z" fill="#fff59d"/>
<path d="M595.2,248.5 595.6,263.3 609.6,276.0 629.6,272.6 634.0,269.0 636.0,263.0 633.0,258.0 629.7,254.0 627.0,250.0 623.6,247.1 595.4,248.2Z" fill="#fff59d"/>
<path d="M557.5,263.7 555.9,268.9 563.5,276.5 577.1,278.1 587.6,293.1 606.4,284.3 609.6,276.0 595.6,263.3 595.2,248.5 570.5,248.5Z" fill="#fff59d"/>
<path d="M586.9,310.8 587.6,293.1 577.1,278.1 563.5,276.5 558.0,312.5Z" fill="#ff3600"/>
<path d="M557.1,313.2 558.0,312.5 563.5,276.5 555.9,268.9 546.4,270.3 532.6,295.3 540.1,310.2Z" fill="#8b0000"/>
<path d="M532.6,295.3 546.4,270.3 533.7,264.4 510.2,271.9 511.6,288.5Z" fill="#8b0000"/>
<path d="M489.0,260.5 474.9,288.8 480.2,299.2 501.5,300.5 511.6,288.5 510.2,271.9 505.8,267.9Z" fill="#8b0000"/>
<path d="M447.8,265.6 451.9,282.1 474.9,288.8 489.0,260.5 487.0,256.6 464.4,253.0Z" fill="#8b0000"/>
<path d="M409.5,277.7 414.5,291.7 440.1,296.6 451.9,282.1 447.8,265.6 436.8,260.1 411.0,275.2Z" fill="#ff8731"/>
<path d="M377.0,257.5 374.0,263.0 372.4,278.6 370.0,294.0 369.0,305.0 368.9,305.7 389.3,311.4 406.6,307.2 414.5,291.7 409.5,277.7 392.8,275.7 380.2,255.2 373.7,253.3Z" fill="#ffc266"/>
<path d="M398.0,347.0 418.8,326.2 406.6,307.2 389.3,311.4 368.9,305.7 367.0,317.7 363.8,333.0 361.5,344.3 395.0,345.4Z" fill="#fff59d"/>
<path d="M443.7,309.9 440.1,296.6 414.5,291.7 406.6,307.2 418.8,326.2 426.0,327.7 433.6,325.7Z" fill="#ff8731"/>
<path d="M474.9,288.8 451.9,282.1 440.1,296.6 443.7,309.9 470.9,318.6 480.2,299.2Z" fill="#8b0000"/>
<path d="M470.9,318.6 471.7,322.4 484.0,330.0 491.9,348.2 514.7,338.0 518.9,326.1 509.4,318.9 501.5,300.5 480.2,299.2Z" fill="#8b0000"/>
<path d="M509.4,318.9 518.9,326.1 521.3,325.5 540.1,310.2 532.6,295.3 511.6,288.5 501.5,300.5Z" fill="#8b0000"/>
<path d="M549.7,349.5 558.9,333.8 557.1,313.2 540.1,310.2 521.3,325.5Z" fill="#ff8731"/>
<path d="M558.9,333.8 591.1,343.4 592.3,341.8 587.9,311.6 586.9,310.8 558.0,312.5 557.1,313.2Z" fill="#fff59d"/>
<path d="M606.4,284.3 587.6,293.1 586.9,310.8 587.9,311.6 606.8,309.5 613.2,303.4 630.5,302.1 630.7,298.0 633.8,295.0 632.0,288.6 624.4,287.0 620.4,278.0 628.0,274.0 629.6,272.6 609.6,276.0Z" fill="#ffc266"/>
<path d="M630.0,310.5 630.5,302.1 613.2,303.4 606.8,309.5 587.9,311.6 592.3,341.8 619.5,335.0 621.8,335.6 634.8,314.0Z" fill="#ff3600"/>
<path d="M631.7,347.4 632.0,347.0 637.0,344.0 644.7,338.6 651.0,332.4 656.5,321.4 655.0,316.7 646.0,319.0 638.5,316.7 634.8,314.0 621.8,335.6Z" fill="#fff59d"/>
<path d="M619.5,335.0 592.3,341.8 591.1,343.4 589.1,364.3 593.0,365.0 598.0,368.3 608.8,369.0 616.6,365.0 624.4,362.0 623.7,358.0 629.0,351.0 631.7,347.4 621.8,335.6Z" fill="#ffc266"/>
<path d="M558.9,333.8 549.7,349.5 549.2,353.6 557.0,354.7 566.6,357.8 569.7,355.5 579.0,356.0 582.0,363.0 589.1,364.3 591.1,343.4Z" fill="#ffc266"/>
<path d="M514.7,338.0 491.9,348.2 490.5,352.8 506.3,372.4 506.5,371.0 512.0,364.5 524.4,360.0 533.8,351.6 541.6,347.7 544.7,353.0 549.2,353.6 549.7,349.5 521.3,325.5 518.9,326.1Z" fill="#ffc266"/>
<path d="M472.5,360.2 490.5,352.8 491.9,348.2 484.0,330.0 471.7,322.4 463.5,334.6Z" fill="#ff8731"/>
<path d="M433.6,325.7 448.6,339.7 463.5,334.6 471.7,322.4 470.9,318.6 443.7,309.9Z" fill="#ff8731"/>
<path d="M433.6,325.7 426.0,327.7 418.8,326.2 398.0,347.0 401.5,354.7 427.5,359.5 428.0,359.0 445.5,352.2 448.6,339.7Z" fill="#ff3600"/>
<path d="M398.0,347.0 395.0,345.4 361.5,344.3 360.7,348.0 357.5,349.0 349.7,355.0 357.5,360.0 360.0,368.5 371.6,371.6 382.5,376.0 388.8,381.7 393.5,380.3 401.5,354.7Z" fill="#ff3600"/>
<path d="M396.6,379.4 404.4,386.4 412.6,386.8 428.3,364.2 427.5,359.5 401.5,354.7 393.5,380.3Z" fill="#8b0000"/>
<path d="M463.5,334.6 448.6,339.7 445.5,352.2 428.0,359.0 427.5,359.5 428.3,364.2 412.6,386.8 415.4,387.0 422.4,385.6 428.6,387.0 429.4,381.7 435.0,380.0 440.6,382.6 440.5,379.1 459.4,364.5 468.2,365.9 472.5,360.2Z" fill="#ffc266"/>
<path d="M468.2,365.9 459.4,364.5 440.5,379.1 440.6,382.6 443.5,384.0 454.4,391.0 463.8,392.7 463.8,396.6 465.5,397.9 472.4,381.5Z" fill="#ff8731"/>
<path d="M472.5,360.2 468.2,365.9 472.4,381.5 505.1,381.5 506.3,372.4 490.5,352.8Z" fill="#ff3600"/>
<path d="M465.5,397.9 473.0,403.6 481.0,401.0 488.5,400.8 493.0,404.0 502.5,400.0 511.0,399.0 507.0,393.0 505.0,382.0 505.1,381.5 472.4,381.5Z" fill="#ff8731"/>
<polygon points="713.5,364.7 717.4,364.7 718.7,372.5 718.0,379.0 722.0,384.0 723.3,396.0 722.0,405.0 719.4,414.0 720.0,426.0 718.0,431.0 716.8,439.0 711.6,436.0 706.4,432.4 699.9,428.5 702.5,424.6 696.0,422.0 698.6,415.5 692.0,416.8 696.0,409.0 690.7,405.0 692.0,400.0 688.8,394.7 693.3,390.8 694.6,385.5 703.8,380.3 709.0,376.4 712.9,377.7 713.5,371.0" fill="#ffc266"/>
<polyline points="689.4,394.7 699.9,397.0 707.7,403.8 712.9,410.0 715.5,416.0 719.4,415.5" fill="none"/>
<polygon points="657.0,36.0 661.0,23.0 664.7,17.8 671.0,24.0 680.0,25.6 694.0,21.7 703.0,26.4 711.8,24.0 717.0,27.0 725.0,30.0 729.7,32.0 734.4,35.8 733.7,37.0 731.3,44.0 728.0,47.0 722.7,51.4 716.5,49.0 711.0,50.6 704.0,53.0 700.0,48.6 696.0,43.5 690.0,46.0 686.0,43.0 679.0,42.0 672.5,36.6 664.7,39.7" fill="#fff59d"/>
<polygon points="644.4,39.7 651.0,38.0 657.0,36.0 664.7,39.7 672.5,36.6 679.0,42.0 686.0,43.0 690.0,46.0 696.0,43.5 700.0,48.6 704.0,53.0 704.0,55.0 699.7,59.5 699.3,66.6 703.0,73.6 695.4,78.0 693.8,83.0 689.0,86.0 690.7,91.6 688.7,94.5 683.5,100.0 682.0,104.0 682.0,112.0 679.0,113.0 673.0,110.0 669.0,102.0 664.7,95.0 661.4,92.5 656.0,84.0 653.6,78.9 654.0,70.0 652.0,61.0 647.5,48.0" fill="#fff59d"/>
<polygon points="703.0,73.6 704.0,72.8 709.4,77.5 712.5,76.7 716.5,80.0 721.0,79.0 726.6,77.5 728.6,80.7 732.0,83.0 729.7,90.8 728.8,92.5 725.8,108.0 727.8,118.0 723.5,123.0 718.0,127.7 704.0,125.7 698.5,129.6 684.8,129.6 682.0,112.0 682.0,104.0 683.5,100.0 688.7,94.5 690.7,91.6 689.0,86.0 693.8,83.0 695.4,78.0" fill="#fff59d"/>
<polygon points="734.4,35.8 739.0,34.0 747.0,37.4 751.6,35.0 761.0,36.6 772.0,32.0 778.0,33.5 781.0,42.0 789.0,51.4 795.4,54.6 798.5,60.8 805.5,63.0 805.5,67.8 799.0,71.0 803.0,78.0 804.7,87.4 811.0,90.5 806.0,98.0 800.0,103.0 798.5,110.8 801.0,117.8 776.6,121.8 768.8,127.7 770.8,135.5 765.0,143.3 753.0,149.0 748.3,147.0 741.5,151.0 723.9,151.0 729.7,143.3 722.0,135.5 720.0,128.7 718.0,127.7 723.5,123.0 727.8,118.0 725.8,108.0 728.8,92.5 729.7,90.8 732.9,83.0 735.2,74.4 734.4,68.0 732.0,59.5 734.4,52.5 731.3,44.0 733.7,37.0" fill="#fff59d"/>
<polygon points="711.0,50.6 716.5,49.0 722.7,51.4 728.0,47.0 731.3,44.0 734.4,52.5 732.0,59.5 734.4,68.0 731.3,66.6 725.8,62.7 720.4,62.0 718.0,58.0 713.3,57.6 713.0,55.0 711.8,51.0" fill="#fff59d"/>
<polygon points="704.0,53.0 711.0,50.6 711.8,51.0 713.0,55.0 709.4,58.8 704.7,62.7 707.0,65.8 712.5,67.8 713.0,69.0 713.0,76.7 709.4,77.5 704.0,72.8 699.3,66.6 699.7,59.5 704.0,55.0" fill="#fff59d"/>
<polygon points="704.7,62.7 709.4,58.8 713.3,57.6 718.0,58.0 720.4,62.0 719.6,65.8 716.5,67.4 712.5,67.8 707.0,65.8" fill="#fff59d"/>
<polygon points="713.0,69.0 719.6,66.6 725.8,62.7 731.3,66.6 734.4,69.0 734.8,75.0 732.0,83.0 728.6,80.7 726.6,77.5 721.0,79.0 716.5,80.0 713.0,76.7" fill="#ffc266"/>
</g>
<polygon points="489.0,14.0 492.0,23.0 499.0,24.0 505.0,27.0 511.0,36.6 520.4,39.7 523.5,46.0 533.0,46.0 537.5,50.0 536.0,59.0 541.0,63.0 549.0,61.7 552.0,55.0 555.5,53.5 556.5,65.0 561.0,71.0 569.0,76.4 573.0,80.0 581.0,81.0 588.0,84.0 596.0,82.0 604.0,84.0 610.0,90.0 615.0,94.0 621.0,95.0 626.0,96.0 631.0,93.5 636.0,94.5 639.0,98.6 646.0,100.0 656.0,101.7 652.0,109.0 648.5,116.6 646.0,124.0 643.8,130.0 640.0,141.0 642.0,148.6 639.0,156.4 642.0,164.0 639.0,170.0 636.0,172.5 630.0,171.0 626.6,176.7 621.0,184.5 617.0,192.0 609.4,197.0 609.0,203.0 605.0,207.0 601.6,210.0 600.5,220.0 599.0,229.0 604.7,222.0 611.0,220.0 618.8,218.8 621.5,222.0 623.5,227.4 627.0,233.0 629.7,238.0 626.0,243.0 623.5,247.0 627.0,250.0 629.7,254.0 633.0,258.0 636.0,263.0 634.0,269.0 628.0,274.0 620.4,278.0 624.4,287.0 632.0,288.6 633.8,295.0 630.7,298.0 630.0,310.5 638.5,316.7 646.0,319.0 655.0,316.7 656.5,321.4 651.0,332.4 644.7,338.6 637.0,344.0 632.0,347.0 629.0,351.0 623.7,358.0 624.4,362.0 616.6,365.0 608.8,369.0 598.0,368.3 593.0,365.0 582.0,363.0 579.0,356.0 569.7,355.5 566.6,357.8 557.0,354.7 544.7,353.0 541.6,347.7 533.8,351.6 524.4,360.0 512.0,364.5 506.5,371.0 505.0,382.0 507.0,393.0 511.0,399.0 502.5,400.0 493.0,404.0 488.5,400.8 481.0,401.0 473.0,403.6 463.8,396.6 463.8,392.7 454.4,391.0 443.5,384.0 435.0,380.0 429.4,381.7 428.6,387.0 422.4,385.6 415.4,387.0 404.4,386.4 396.6,379.4 388.8,381.7 382.5,376.0 371.6,371.6 360.0,368.5 357.5,360.0 349.7,355.0 357.5,349.0 360.7,348.0 363.8,333.0 367.0,317.7 369.0,305.0 370.0,294.0 372.4,278.6 374.0,263.0 377.0,257.5 371.5,250.5 375.0,244.0 372.0,239.0 377.7,241.0 376.0,231.7 373.8,225.5 366.0,220.8 356.6,214.6 352.0,205.0 346.5,195.8 345.7,186.4 348.8,181.7 338.0,178.6 336.3,175.5 338.5,169.7 329.0,168.0 321.0,164.0 313.5,160.0 305.7,155.0 296.0,154.0 289.0,151.0 283.0,151.7 282.0,145.5 272.0,140.0 286.0,137.0 284.6,133.0 276.0,128.0 272.0,120.5 279.0,114.0 294.7,111.0 298.0,113.5 307.0,113.5 310.4,108.8 321.0,107.0 327.5,108.8 330.7,117.4 335.4,122.8 344.7,118.0 351.0,120.5 359.6,116.6 360.4,121.0 369.7,121.0 368.0,111.0 367.4,98.6 362.7,82.7 360.4,73.0 358.8,71.0 369.7,75.0 379.0,73.0 380.7,78.0 382.0,87.4 387.0,87.4 399.0,90.0 411.0,92.5 418.0,88.0 418.0,81.0 420.4,76.4 434.4,68.6 446.0,64.0 458.0,59.0 461.0,50.0 461.0,33.0 461.8,23.0 468.8,18.6 478.0,16.0" fill="none" stroke="#1c100a" stroke-width="1.2" stroke-linejoin="round"/>
<polygon points="459.4,106.4 465.7,98.6 476.6,98.6 489.0,102.5 506.0,103.0 514.0,112.0 517.0,123.6 514.0,133.8 504.7,136.0 500.0,143.0 490.7,144.7 486.0,138.5 473.5,137.7 467.0,128.0 462.5,119.0" fill="none" stroke="#1c100a" stroke-width="1.1" stroke-linejoin="round"/>
<polyline points="376.0,258.0 380.0,264.0 384.0,271.0 388.6,278.6" fill="none" stroke="#e8f0ea" stroke-width="1.6"/>
<ellipse cx="262.7" cy="120.5" rx="2.2" ry="1.4" fill="#3a0a08"/>
<ellipse cx="292.0" cy="156.0" rx="1.6" ry="1.2" fill="#3a0a08"/>
<ellipse cx="308.8" cy="161.0" rx="2" ry="1.2" fill="#3a0a08"/>
<ellipse cx="316.6" cy="175.0" rx="3.2" ry="2" fill="#3a0a08"/>
<ellipse cx="323.0" cy="173.6" rx="1.4" ry="1" fill="#3a0a08"/>
<ellipse cx="319.0" cy="168.0" rx="1.2" ry="1" fill="#3a0a08"/>
<ellipse cx="343.0" cy="192.0" rx="2" ry="3" fill="#3a0a08"/>
<ellipse cx="338.6" cy="204.4" rx="2.4" ry="1.4" fill="#3a0a08"/>
<ellipse cx="368.0" cy="229.0" rx="4" ry="1.6" fill="#3a0a08"/>
<ellipse cx="573.0" cy="352.0" rx="3" ry="1.8" fill="#e8f1ea" stroke="#24120a" stroke-width=".7"/>
<ellipse cx="372.5" cy="297.0" rx="2.6" ry="2" fill="#e8f1ea" stroke="#24120a" stroke-width=".7"/>
<ellipse cx="371.5" cy="305.5" rx="2" ry="1.6" fill="#e8f1ea" stroke="#24120a" stroke-width=".7"/>
<ellipse cx="326.0" cy="165.5" rx="2.2" ry="1.2" fill="#e8f1ea" stroke="#24120a" stroke-width=".7"/>
<ellipse cx="281.0" cy="130.5" rx="3" ry="1.4" fill="#e8f1ea" stroke="#24120a" stroke-width=".7"/>
</g>
</svg>
<!-- MAP END -->
 <div style="left:258px;top:418px;font-family:'Liberation Sans',sans-serif;font-size:14.5px;line-height:18px;color:#222;">* Pour 100 enfants de 0 à 2 ans.</div>
 <div style="left:258px;top:443px;font-family:'Liberation Sans',sans-serif;font-size:14.5px;line-height:18px;color:#222;"><b>Sources •</b> MEN-MESR-DEPP ; INSEE.</div>
 <div style="left:796.500px;top:171.300px;font-family:'Liberation Sans',sans-serif;font-size:14px;line-height:16px;color:#222;letter-spacing:-0.6px;">Nombre de places</div>
 <div style="left:760px;top:191px;width:30px;height:16px;background:#6b5248;border:1px solid #222;"></div>
 <div style="left:760px;top:210px;width:30px;height:16px;background:#ee4f1c;border:1px solid #222;"></div>
 <div style="left:760px;top:228.5px;width:30px;height:16px;background:#f98a3c;border:1px solid #222;"></div>
 <div style="left:760px;top:247px;width:30px;height:16px;background:#fbc56e;border:1px solid #222;"></div>
 <div style="left:760px;top:265.5px;width:30px;height:16px;background:#fdec9e;border:1px solid #222;"></div>
 <div class="lg" style="left:796.500px;top:189px;">[ 8 ; 18 ]</div>
 <div class="lg" style="left:796.500px;top:207.8px;">[ 6 ; 8 [</div>
 <div class="lg" style="left:796.500px;top:226px;">[ 4 ; 6 [</div>
 <div class="lg" style="left:796.500px;top:244.3px;">[ 3 ; 4 [</div>
 <div class="lg" style="left:796.500px;top:263.2px;">[ 0 ; 3 [</div>
 <!-- right column serif text -->
 <div id="rtext" style="left:964px;top:-14px;width:24px;overflow:hidden;height:470px;font-family:'Liberation Serif',serif;font-size:23px;line-height:26.550px;color:#111;white-space:pre;">nei
ans
far
Pas
Côt
ou
cue
acc

Con
cur
cuc
blic
vés
me
son
deu</div>
 <!-- v scrollbar -->
 <div style="left:988px;top:0;width:17px;height:451px;background:#fdfcf6;"></div>
 <div style="left:990px;top:1px;width:14px;height:16px;border-radius:2px;background:linear-gradient(90deg,#d3defa,#b9cbf5);border:1px solid #dfe7fb;"></div>
 <svg style="left:993px;top:6px" width="9" height="6" viewBox="0 0 9 6"><path d="M1 5 L4.500 1.500 L8 5" fill="none" stroke="#4d6185" stroke-width="2"/></svg>
 <div style="left:990px;top:382px;width:14px;height:10px;border-radius:2px;background:linear-gradient(90deg,#d3defa,#b9cbf5);border:1px solid #aebfe8;"></div>
 <div style="left:990px;top:436px;width:14px;height:15px;border-radius:2px;background:linear-gradient(90deg,#d3defa,#b9cbf5);border:1px solid #aebfe8;"></div>
 <svg style="left:993px;top:441px" width="9" height="6" viewBox="0 0 9 6"><path d="M1 1 L4.500 4.500 L8 1" fill="none" stroke="#4d6185" stroke-width="2"/></svg>
 <!-- left panel icons -->
 <svg style="left:12px;top:12px" width="20" height="24" viewBox="0 0 20 24"><path d="M5 1.500h9l4 4v14h-13z" fill="#fff" stroke="#c9c9c9"/><path d="M2 4.500h9l4 4v14h-13z" fill="#fff" stroke="#bdbdbd"/><path d="M4.500 11h8M4.500 13h8M4.500 15h8M4.500 17h8" stroke="#c8c8c8" stroke-width=".8"/></svg>
 <svg style="left:11px;top:64px" width="22" height="20" viewBox="0 0 22 20"><rect x="1" y="5" width="8" height="14" rx="2" fill="#9c9c9c" stroke="#7f7f7f"/><rect x="13" y="5" width="8" height="14" rx="2" fill="#9c9c9c" stroke="#7f7f7f"/><rect x="3" y="1" width="4" height="5" fill="#a8a8a8"/><rect x="15" y="1" width="4" height="5" fill="#a8a8a8"/><rect x="8" y="8" width="6" height="5" fill="#8a8a8a"/></svg>
 <div style="left:11px;top:116px;width:21px;height:21px;border-radius:11px;background:radial-gradient(circle at 50% 30%,#b9ec6a 0,#62b81e 55%,#3f8f10 100%);border:1px solid #4c8f1c;"></div>
 <div class="t b" style="left:18px;top:119px;color:#2c6a0c;font-size:12px;">?</div>
 <svg style="left:10px;top:380px" width="24" height="24" viewBox="0 0 24 24"><path d="M7 18 L17 6 a3 3 0 0 1 4.500 4 L10 22 a4.500 4.500 0 0 1 -7 -6 L13 5" fill="none" stroke="#e6e6e6" stroke-width="2"/></svg>
 <svg style="left:9px;top:433px" width="26" height="20" viewBox="0 0 26 20"><path d="M2 1.500h13a1.500 1.500 0 0 1 1.500 1.500v6a1.500 1.500 0 0 1 -1.500 1.500h-7l-3 3v-3h-3a1.500 1.500 0 0 1 -1.500 -1.500v-6a1.500 1.500 0 0 1 1.500 -1.500z" fill="#f8c93a" stroke="#b98a14"/><path d="M11 6.500h12a1.500 1.500 0 0 1 1.500 1.500v6a1.500 1.500 0 0 1 -1.500 1.500h-2v3l-3-3h-7a1.500 1.500 0 0 1 -1.500 -1.500v-6a1.500 1.500 0 0 1 1.500 -1.500z" fill="#fbd75a" stroke="#b98a14"/><path d="M12.500 10h9M12.500 12.500h9" stroke="#b98a14" stroke-width="1"/></svg>
</div>
<!-- shadow under pdf toolbar -->
<div style="left:4px;top:207px;width:1005px;height:3px;background:linear-gradient(rgba(60,60,60,.45),rgba(60,60,60,0));"></div>
<!-- h scrollbar row -->
<div style="left:4px;top:658px;width:1005px;height:19px;background:#fefefc;"></div>
<div style="left:4px;top:658px;width:46px;height:19px;background:#696969;background-image:radial-gradient(#747474 0.6px,transparent 0.7px);background-size:2px 2px;"></div>
<div style="left:46px;top:659px;width:107px;height:17px;background:#e9e9e9;"></div>
<div class="t" style="left:65.500px;top:660px;letter-spacing:-.3px;">210 x 297 mm</div>
<div style="left:154px;top:660px;width:15px;height:15px;border-radius:2px;background:linear-gradient(#d3defa,#b9cbf5);border:1px solid #aebfe8;"></div>
<svg style="left:158px;top:663px" width="6" height="9" viewBox="0 0 6 9"><path d="M5 1 L1.500 4.500 L5 8" fill="none" stroke="#4d6185" stroke-width="2"/></svg>
<div style="left:171px;top:660px;width:574px;height:15px;border-radius:2px;background:linear-gradient(#dbe4fc,#c3d2f8 50%,#b7c8f4);border:1px solid #a9bbea;"></div>
<div style="left:454px;top:664px;width:8px;height:7px;background:repeating-linear-gradient(90deg,#eef3ff 0 1px,#9fb2e2 1px 2px);"></div>
<div style="left:976px;top:660px;width:15px;height:15px;border-radius:2px;background:linear-gradient(#d3defa,#b9cbf5);border:1px solid #aebfe8;"></div>
<svg style="left:981px;top:663px" width="6" height="9" viewBox="0 0 6 9"><path d="M1 1 L4.500 4.500 L1 8" fill="none" stroke="#4d6185" stroke-width="2"/></svg>
<div style="left:992px;top:658px;width:17px;height:19px;background:#ece9d8;"></div>
<!-- status bar -->
<div style="left:4px;top:677px;width:1005px;height:22px;background:linear-gradient(#f6f4e8,#ece9d8);border-top:1px solid #cfccba;"></div>
<div class="t" style="left:6px;top:682px;">Terminé</div>
<div style="left:558px;top:680px;width:1px;height:17px;background:#d2cfbd;"></div>
<div style="left:581.5px;top:680px;width:1px;height:17px;background:#d2cfbd;"></div>
<div style="left:605.5px;top:680px;width:1px;height:17px;background:#d2cfbd;"></div>
<div style="left:629.5px;top:680px;width:1px;height:17px;background:#d2cfbd;"></div>
<div style="left:653px;top:680px;width:1px;height:17px;background:#d2cfbd;"></div>
<div style="left:677px;top:680px;width:1px;height:17px;background:#d2cfbd;"></div>
<div style="left:700px;top:680px;width:1px;height:17px;background:#d2cfbd;"></div>
<div style="left:865px;top:680px;width:1px;height:17px;background:#d2cfbd;"></div>
<div style="left:908px;top:680px;width:1px;height:17px;background:#d2cfbd;"></div>
<div style="left:706px;top:681px;width:15px;height:15px;border-radius:8px;background:radial-gradient(circle at 40% 35%,#8fc4f6 0,#2f74d6 60%,#1c4aa0 100%);"></div>
<svg style="left:706px;top:681px" width="15" height="15" viewBox="0 0 16 16"><path d="M4 3 C6 2,8 3,7 5 C6 7,4 6,3 8 C2 7,2 4,4 3z M9 7 C11 6,13 8,12 10 C11 12,9 13,8 11 C8 9,8 8,9 7z" fill="#4fae3e"/></svg>
<div class="t" style="left:726px;top:682px;">Zone inconnue</div>
<svg style="left:874px;top:682px" width="18" height="15" viewBox="0 0 18 15"><path d="M1 5 L7 1 V3.500 C11 3.500,13 6,13 9 C11.500 7,10 6.500,7 6.500 V9z" fill="#c9c9c9" stroke="#a9a9a9" stroke-width=".6"/><rect x="9" y="8" width="7" height="6" fill="#b0b0b0" stroke="#8a8a8a" stroke-width=".6"/><path d="M10.500 8 V6.500 a2 2 0 0 1 4 0 V8" fill="none" stroke="#9a9a9a" stroke-width="1.200"/></svg>
<svg style="left:897px;top:688px" width="7" height="4" viewBox="0 0 7 4"><path d="M0 0h7L3.500 4z" fill="#222"/></svg>
<svg style="left:994px;top:685px" width="12" height="12" viewBox="0 0 12 12"><g fill="#b9b6a3"><rect x="9" y="1" width="2" height="2"/><rect x="9" y="5" width="2" height="2"/><rect x="9" y="9" width="2" height="2"/><rect x="5" y="5" width="2" height="2"/><rect x="5" y="9" width="2" height="2"/><rect x="1" y="9" width="2" height="2"/></g></svg>
<!-- CONTENT END -->
<!-- STATUS -->
<!-- BEHIND -->
<!-- TASKBAR START -->
<!-- behind: word window remnants -->
<div style="left:0;top:703px;width:1024px;height:10px;background:#ece9d8;"></div><div style="left:0;top:703px;width:656px;height:10px;background:linear-gradient(#8eaee8,#b4c8f2 50%,#c8d8f6 80%,#7f9fe0 90%,#f4f7fd 100%);border-radius:0 0 4px 0;"></div>
<div style="left:0;top:713px;width:1024px;height:21px;background:#efecdd;border-top:1px solid #fbfaf4;"></div>
<div style="left:4px;top:715px;width:330px;height:17px;border:1px solid #dcd9c8;border-right:none;"></div>
<div style="left:193px;top:715px;width:1px;height:17px;background:#dcd9c8;"></div>
<div class="t" style="left:10px;top:717px;letter-spacing:0;">Page&nbsp; 11</div>
<div class="t" style="left:78px;top:717px;letter-spacing:0;">Sec&nbsp; 1</div>
<div class="t" style="left:147px;top:717px;letter-spacing:0;">11/11</div>
<div class="t" style="left:201px;top:717px;letter-spacing:0;">À&nbsp; 3,5 cm</div>
<div class="t" style="left:260px;top:717px;letter-spacing:0;">Li&nbsp; 1</div>
<div class="t" style="left:299px;top:717px;letter-spacing:0;">Col&nbsp; 1</div>
<div class="sb" style="left:357px;">ENR</div><div class="sb" style="left:387px;">REV</div><div class="sb" style="left:416px;">EXT</div><div class="sb" style="left:445px;">RFP</div>
<div style="left:476px;top:715px;width:64px;height:17px;border:1px solid #dcd9c8;"></div>
<div class="t" style="left:479px;top:717px;letter-spacing:0;">Français (Fr</div>
<div style="left:546px;top:715px;width:40px;height:17px;border:1px solid #dcd9c8;"></div>
<svg style="left:556px;top:717px" width="22" height="14" viewBox="0 0 22 14"><path d="M1 2 C4 1,7 1,9 3 C11 1,14 1,17 2 V11 C14 10,11 10,9 12 C7 10,4 10,1 11z" fill="#fff" stroke="#333" stroke-width="1"/><path d="M9 3v9" stroke="#333"/><path d="M14 4 L21 13 M21 4 L14 13" stroke="#c8281e" stroke-width="1.600"/></svg>
<div style="left:590px;top:715px;width:40px;height:17px;border:1px solid #e4e1d1;"></div>
<div style="left:634px;top:715px;width:40px;height:17px;border:1px solid #e4e1d1;"></div>
<div style="left:678px;top:715px;width:20px;height:17px;border:1px solid #e4e1d1;"></div>
<!-- peeking toolbar icons -->
<div style="left:10px;top:703px;width:7px;height:2px;background:#223;"></div><div style="left:24px;top:703px;width:2px;height:2px;background:#223;"></div>
<div style="left:78px;top:703px;width:3px;height:3px;background:#334;"></div><div style="left:111px;top:703px;width:5px;height:2px;background:#223;"></div>
<div style="left:262px;top:703px;width:14px;height:3px;background:#223;"></div><div style="left:287px;top:703px;width:10px;height:3px;background:#334;"></div><div style="left:310px;top:703px;width:12px;height:3px;background:#223;"></div>
<div style="left:340px;top:703px;width:12px;height:3px;background:#2a4aa8;"></div><div style="left:359px;top:703px;width:10px;height:3px;background:#4a6ab8;"></div><div style="left:381px;top:703px;width:12px;height:3px;background:#b83a2a;"></div><div style="left:404px;top:703px;width:13px;height:3px;background:#334a78;"></div>
<div style="left:431px;top:703px;width:16px;height:4px;background:#f7f400;"></div><div style="left:465px;top:703px;width:16px;height:4px;background:#0a1fe0;"></div><div style="left:499px;top:703px;width:16px;height:4px;background:#111;"></div>
<div style="left:533px;top:703px;width:15px;height:3px;background:#1a2fa8;"></div><div style="left:557px;top:703px;width:15px;height:2px;background:repeating-linear-gradient(90deg,#223 0 2px,transparent 2px 4px);"></div><div style="left:580px;top:704px;width:15px;height:2px;background:#111;"></div><div style="left:607px;top:703px;width:13px;height:3px;background:#8a93a8;"></div><div style="left:627px;top:703px;width:13px;height:3px;background:#4a9a4a;"></div>
<div style="left:648px;top:703px;width:8px;height:9px;background:#1f3fa8;border-radius:0 0 4px 0;"></div><svg style="left:649px;top:706px" width="6" height="4" viewBox="0 0 6 4"><path d="M0 0h6L3 4z" fill="#fff"/></svg>

<!-- taskbar -->
<div style="left:0;top:733px;width:1024px;height:35px;background:linear-gradient(#3c86f0 0,#3a80ee 2px,#2a6be2 4px,#245fdc 7px,#2562de 20px,#2259d2 31px,#1b48b8 35px);"></div>
<div style="left:0;top:737px;width:136px;height:31px;border-radius:0 12px 12px 0;background:linear-gradient(#5fb35a 0,#3f9a3f 20%,#379137 60%,#2c7f2c 100%);box-shadow:inset -6px 0 8px -3px #1f6a1f,inset 0 2px 2px #8fd08a;"></div>
<svg style="left:10px;top:741px" width="22" height="22" viewBox="0 0 22 22"><path d="M3 3 C6 1.500,8 2,10 3.500 L8.500 10 C6.500 8.500,4.500 8.500,1.500 9.500z" fill="#e8492e"/><path d="M11.500 4 C14 5.500,16 5.500,19 4 L17.500 10.500 C15 12,12.500 12,10 10.500z" fill="#7cc242"/><path d="M1 11.500 C4 10.500,6 10.500,8 12 L6.500 18.500 C4.500 17,2.500 17,-.5 18z" fill="#3d7fe0"/><path d="M9.500 12.500 C12 14,14 14,17 12.500 L15.500 19 C13 20.500,10.500 20.500,8 19z" fill="#f7c52e"/></svg>
<div class="b" style="left:34px;top:741px;font-family:'Liberation Sans',sans-serif;font-style:italic;font-size:17.5px;line-height:22px;color:#fff;text-shadow:1px 1px 1px #1d4f1d;letter-spacing:.2px;">démarrer</div>
<div style="left:146px;top:742px;width:3px;height:22px;background:repeating-linear-gradient(#1a44b0 0 2px,transparent 2px 4px);"></div>
<!-- quick launch icons -->
<svg style="left:158px;top:743px" width="17" height="17" viewBox="0 0 17 17"><rect x="1" y="2" width="14" height="13" rx="3" fill="#e9f3ff" stroke="#6fa0e0"/><path d="M11 5 a4 4 0 1 0 1 5.500" fill="none" stroke="#2a62c8" stroke-width="2"/><path d="M9 3 l5 1 l-3 3z" fill="#e9a51e"/></svg>
<div style="left:181px;top:743px;width:16px;height:16px;background:#b01c14;border:1px solid #7a0c08;"></div>
<div style="left:184px;top:742px;font-family:'Liberation Serif',serif;font-size:15px;line-height:18px;color:#fff;">A</div>
<svg style="left:203px;top:742px" width="18" height="18" viewBox="0 0 16 16"><rect x="6" y="0" width="10" height="8" fill="#e33b2e"/><rect x="8" y="6" width="8" height="10" fill="#2f8a3c"/><circle cx="4.500" cy="4" r="3.200" fill="#fff"/><ellipse cx="5" cy="12" rx="4" ry="3" fill="#f2b320"/><rect x="3" y="6" width="3" height="4" fill="#fff"/></svg>
<svg style="left:226px;top:742px" width="19" height="19" viewBox="0 0 18 18"><path d="M14 12.500 A5.400 5.400 0 1 1 14.800 9.200 L5 9.200" fill="none" stroke="#5fb4f6" stroke-width="3"/><path d="M1 14.500 C2 6,11 1.500,17 4.500" fill="none" stroke="#f5c23a" stroke-width="1.800"/></svg>
<svg style="left:250px;top:742px" width="17" height="18" viewBox="0 0 17 18"><rect x="3.500" y=".5" width="13" height="15" fill="#fff" stroke="#8a9ac0"/><path d="M6 4h8M6 7h8M6 10h8" stroke="#b0bde0"/><rect x=".5" y="4.500" width="10" height="9" fill="#2b57b4" stroke="#1a3a88"/><text x="1.500" y="12" font-family="Liberation Sans,sans-serif" font-weight="bold" font-size="8" fill="#fff">W</text></svg>
<svg style="left:272px;top:742px" width="18" height="18" viewBox="0 0 18 18"><circle cx="9" cy="9" r="7.500" fill="#4a8ad8" stroke="#2a5aa8"/><path d="M3 8 C6 4,12 4,15 8 L12 13 H6z" fill="#e8e2d0"/><path d="M4 10 l5 3 l5-3" fill="none" stroke="#b06a2a" stroke-width="1.600"/></svg>
<svg style="left:295px;top:743px" width="18" height="17" viewBox="0 0 18 17"><rect x="3" y="1" width="12" height="6" rx="1" fill="#e9e9e9" stroke="#888"/><path d="M9 7v4M1 12h16" stroke="#e0a020" stroke-width="2"/><rect x="6" y="10" width="6" height="4" fill="#d8d8d8" stroke="#777"/></svg>
<div class="t b" style="left:321px;top:739px;color:#cfe0ff;font-size:12px;">»</div>
<div style="left:342px;top:742px;width:3px;height:22px;background:repeating-linear-gradient(#1a44b0 0 2px,transparent 2px 4px);"></div>
<!-- task buttons -->
<div class="tb" style="left:349px;width:109px;"></div>
<div class="tb act" style="left:460px;width:110px;"></div>
<div class="tb" style="left:572px;width:107px;"></div>
<div class="tb" style="left:681px;width:108px;"></div>
<div class="tb" style="left:790px;width:108px;"></div>
<svg style="left:358px;top:745px" width="17" height="17" viewBox="0 0 18 18"><circle cx="9" cy="9" r="7.500" fill="#4a8ad8" stroke="#2a5aa8"/><path d="M3 8 C6 4,12 4,15 8 L12 13 H6z" fill="#e8e2d0"/><path d="M4 10 l5 3 l5-3" fill="none" stroke="#b06a2a" stroke-width="1.600"/></svg>
<div class="t tl" style="left:379px;">Courrier en...</div>
<svg style="left:469px;top:744px" width="19" height="19" viewBox="0 0 18 18"><path d="M14 12.500 A5.400 5.400 0 1 1 14.800 9.200 L5 9.200" fill="none" stroke="#5fb4f6" stroke-width="3"/><path d="M1 14.500 C2 6,11 1.500,17 4.500" fill="none" stroke="#f5c23a" stroke-width="1.800"/></svg>
<div class="t tl" style="left:489px;"><b style="color:#f7d358">6</b> Interne...</div>
<svg style="left:560px;top:752px" width="7" height="4" viewBox="0 0 7 4"><path d="M0 0h7L3.500 4z" fill="#fff"/></svg>
<svg style="left:579px;top:745px" width="18" height="16" viewBox="0 0 18 16"><path d="M1 3 a1 1 0 0 1 1-1 h5 l2 2 h7 a1 1 0 0 1 1 1 v9 a1 1 0 0 1 -1 1 h-14 a1 1 0 0 1 -1-1z" fill="#f5d25a" stroke="#b8901c"/><path d="M1 6h16" stroke="#fbe89a" stroke-width="1.500"/></svg>
<div class="t tl" style="left:598px;"><b style="color:#f7d358;font-weight:normal">2</b> Explora...</div>
<svg style="left:669px;top:752px" width="7" height="4" viewBox="0 0 7 4"><path d="M0 0h7L3.500 4z" fill="#fff"/></svg>
<svg style="left:690px;top:744px" width="17" height="18" viewBox="0 0 17 18"><rect x="3.500" y=".5" width="13" height="15" fill="#fff" stroke="#8a9ac0"/><path d="M6 4h8M6 7h8M6 10h8" stroke="#b0bde0"/><rect x=".5" y="4.500" width="10" height="9" fill="#2b57b4" stroke="#1a3a88"/><text x="1.500" y="12" font-family="Liberation Sans,sans-serif" font-weight="bold" font-size="8" fill="#fff">W</text></svg>
<div class="t tl" style="left:709px;">CMG - Micr...</div>
<svg style="left:800px;top:744px" width="17" height="17" viewBox="0 0 17 17"><rect x=".5" y=".5" width="16" height="16" fill="#fff" stroke="#c03a1e" stroke-width="1.500"/><rect x="3" y="3" width="11" height="11" fill="#e8683a"/><path d="M5 12 L8 5 L10 9 L12 7 V12z" fill="#fff"/></svg>
<div class="t tl" style="left:819px;">Microsoft ...</div>
<!-- tray -->
<div style="left:913px;top:733px;width:111px;height:35px;background:linear-gradient(#4fb0f8 0,#199af0 4px,#1190ea 20px,#0f84dc 31px,#0c6cc0 35px);border-left:1px solid #0a4aa8;"></div>
<div style="left:903px;top:743px;width:18px;height:18px;border-radius:9px;background:radial-gradient(circle at 40% 35%,#7fc4fb,#2a7fe0 70%);border:1px solid #b9dcfb;"></div>
<svg style="left:908px;top:747px" width="7" height="10" viewBox="0 0 7 10"><path d="M5.500 1 L1.500 5 L5.500 9" fill="none" stroke="#fff" stroke-width="2"/></svg>
<div style="left:923px;top:744px;width:15px;height:15px;background:#fff;border:1px solid #222;border-top:3px solid #c8201c;"></div>
<svg style="left:926px;top:748px" width="10" height="10" viewBox="0 0 10 10"><path d="M5 1 L9 5 L5 9 L1 5z" fill="none" stroke="#111" stroke-width="1.400"/></svg>
<svg style="left:942px;top:743px" width="17" height="17" viewBox="0 0 17 17"><rect x="5" y="1" width="10" height="8" fill="#cfd8e8" stroke="#445"/><rect x="1" y="6" width="10" height="8" fill="#aebbd4" stroke="#334"/><rect x="3" y="8" width="6" height="4" fill="#2a3a6a"/></svg>
<svg style="left:962px;top:744px" width="17" height="15" viewBox="0 0 17 15"><path d="M.5 .5h16L8.500 14.500z" fill="#1a2a9a" stroke="#fff" stroke-width="1"/><path d="M4 3.500h9l-4.500 8z" fill="none" stroke="#fff" stroke-width="1"/></svg>
<div class="t" style="left:981px;top:745px;color:#fff;letter-spacing:0;">11:54</div>
<!-- TASKBAR END -->
</body></html>
